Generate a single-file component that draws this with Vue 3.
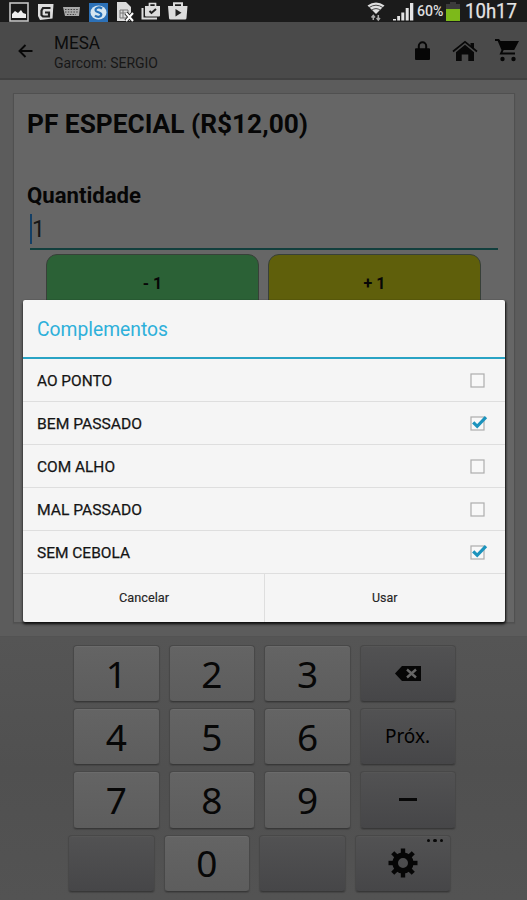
<script setup>
import { ref } from 'vue'

const options = ref([
  { label: 'AO PONTO', checked: false, width: 75 },
  { label: 'BEM PASSADO', checked: true, width: 105 },
  { label: 'COM ALHO', checked: false, width: 78 },
  { label: 'MAL PASSADO', checked: false, width: 105 },
  { label: 'SEM CEBOLA', checked: true, width: 93 },
])

const keyRows = [
  ['1', '2', '3', 'del'],
  ['4', '5', '6', 'next'],
  ['7', '8', '9', 'minus'],
  ['', '0', '', 'gear'],
]
const isDark = (k) => !/^\d$/.test(k)
</script>

<template>
  <div class="screen">
    <header class="status">
      <div class="notifications">
        <svg class="n-image" width="20" height="20" viewBox="0 0 20 20"><rect x="1" y="1" width="18" height="18" fill="#191919" stroke="#c4c4c4" stroke-width="1.6" /><path d="M3 16v-4l3-3 3 2 3-3 2 3 3 1v4z" fill="#eee" /></svg>
        <svg class="n-g" width="17" height="18" viewBox="0 0 17 18"><path d="M1 1h15.500l-1 14.500L3 17l-2-4z" fill="#dedede" /><path d="M13.500 5H6L4.500 7.500V12L6 13.500h6v-4H8" fill="none" stroke="#222" stroke-width="2.200" /></svg>
        <svg class="n-keys" width="17" height="12" viewBox="0 0 17 12"><path d="M0 1h17l-1 9H2z" fill="#aaa" /><path d="M2 3.500h14M2 6h13M4 8.500h9" stroke="#444" stroke-width="1.100" stroke-dasharray="1.500 1.300" /></svg>
        <svg class="n-s" width="19" height="19" viewBox="0 0 19 19"><rect width="19" height="19" fill="#2c71b8" /><ellipse cx="9.500" cy="9.500" rx="8" ry="7" fill="#d5e5f0" /><path d="M13 5.700C10 3.300 6 4.800 6.700 7.600 7.300 9.600 12.600 9 12.300 11.700 12 14.500 7.800 14.300 6 12.500" fill="none" stroke="#2670b8" stroke-width="2.200" /></svg>
        <svg class="n-sim" width="18" height="20" viewBox="0 0 18 20"><path d="M0 0h9l5 5v14H0z" fill="#dcdcdc" /><path d="M3 8h8v8H3zM3 11h8M6 8v8" fill="none" stroke="#777" /><path d="m9 11 7 8m0-8-7 8" stroke="#222" stroke-width="4" /><path d="m9 11 7 8m0-8-7 8" stroke="#fff" stroke-width="2" /></svg>
        <svg class="n-bag" width="20" height="18" viewBox="0 0 20 18"><path d="M1.500 6v10.500H16" fill="none" stroke="#ddd" stroke-width="2" /><path d="M4 4h15v9.500a1 1 0 0 1-1 1H5a1 1 0 0 1-1-1z" fill="#ddd" /><path d="M8.500 4V1.500h6V4" fill="none" stroke="#ddd" stroke-width="1.700" /><path d="m8.500 9 2 2L15 7" fill="none" stroke="#222" stroke-width="2" /></svg>
        <svg class="n-play" width="20" height="18" viewBox="0 0 20 18"><path d="M0 4h19.500l-1 12a1.500 1.500 0 0 1-1.500 1.500H2.500A1.500 1.500 0 0 1 1 16z" fill="#ddd" /><path d="M6 4V1.200h8V4" fill="none" stroke="#ddd" stroke-width="2" /><path d="m7.500 7 6 3.700-6 3.700z" fill="#222" /></svg>
      </div>
      <div class="indicators">
        <svg width="18" height="19" viewBox="0 0 18 19"><path d="M.5 3.500Q9-2.300 17.500 3.500L9 12z" fill="#e0e0e0" /><path d="M2 5.600Q9 .8 16 5.600M4.600 8.200Q9 5 13.400 8.200" fill="none" stroke="#333" stroke-width=".9" /><path d="M6.300 18v-4M4.500 15.500l1.800-2L8 15.500M11.300 13v4M9.600 16l1.700 2 1.700-2" fill="none" stroke="#aaa" stroke-width="1.500" /></svg>
        <svg class="signal" width="21" height="19" viewBox="0 0 21 19"><path d="M0 18.500h3V17H0zM4.200 18.500h2.800V14H4.200zM8.300 18.500h3V10.500h-3zM12.700 18.500h3V6h-3zM17 18.500h3.300V1H17z" fill="#e4e4e4" /></svg>
        <svg class="percent" width="27" height="20"><text x="0" y="14.500" textLength="26.500" lengthAdjust="spacingAndGlyphs">60%</text></svg>
        <svg class="battery" width="14" height="19" viewBox="0 0 14 19"><path d="M4 0h6v2h4v5H0V2h4z" fill="#3b3b3b" /><path d="M0 7h14v12H0z" fill="#7db91a" /></svg>
        <svg class="clock" width="53" height="22"><text x="0" y="18" textLength="52" lengthAdjust="spacingAndGlyphs">10h17</text></svg>
      </div>
    </header>

    <nav class="appbar">
      <svg class="back" width="16" height="14" viewBox="0 0 16 14"><path d="M14.500 7H2M7.500 1 1.500 7l6 6" fill="none" stroke="#080808" stroke-width="1.900" /></svg>
      <div class="titles">
        <svg width="120" height="21"><text class="t1" x="0" y="16" textLength="46" lengthAdjust="spacingAndGlyphs">MESA</text></svg>
        <svg width="120" height="18"><text class="t2" x="0" y="14" textLength="104" lengthAdjust="spacingAndGlyphs">Garcom: SERGIO</text></svg>
      </div>
      <div class="actions">
        <svg width="15" height="19" viewBox="0 0 15 19"><path fill-rule="evenodd" d="M1 7.300h1.800V5a4.700 4.700 0 0 1 9.400 0v2.300H14a1 1 0 0 1 1 1V18a1 1 0 0 1-1 1H1a1 1 0 0 1-1-1V8.300a1 1 0 0 1 1-1zm3.800 0h5.400V5a2.700 2.700 0 0 0-5.400 0z" fill="#060606" /></svg>
        <svg width="26" height="22" viewBox="0 0 26 22"><path d="M1 11.500 13 1.800l12 9.700" fill="none" stroke="#080808" stroke-width="1.700" /><path d="M18.500 3H22v6l-3.500-3z" fill="#080808" /><path d="m13 4.800 9 7.400V21h-5.700v-6.500h-6.600V21H4v-8.800z" fill="#080808" /></svg>
        <svg width="24" height="24" viewBox="0 0 24 24"><path d="M0 1h4l1.500 2H24l-4.800 9H8.700l-1.200 2.500H20v2H4.500l2-4.500L2.700 3H0z" fill="#060606" /><circle cx="7.500" cy="21" r="2.200" fill="#060606" /><circle cx="18.500" cy="21" r="2.200" fill="#060606" /></svg>
      </div>
    </nav>

    <main class="content">
      <section class="card">
        <svg class="heading" width="300" height="34"><text class="h1" x="0" y="25" textLength="281" lengthAdjust="spacingAndGlyphs">PF ESPECIAL (R$12,00)</text></svg>
        <svg class="label" width="200" height="30"><text class="h2" x="0" y="22" textLength="114" lengthAdjust="spacingAndGlyphs">Quantidade</text></svg>
        <div class="field"><span class="caret"></span><span>1</span></div>
        <div class="steppers">
          <button class="step minus">- 1</button>
          <button class="step plus">+ 1</button>
        </div>
      </section>
    </main>

    <section class="keyboard">
      <div v-for="(row, r) in keyRows" :key="r" class="keyrow" :class="{ last: r === 3 }">
        <div v-for="(k, c) in row" :key="c" class="key" :class="{ dark: isDark(k) }">
          <svg v-if="k === 'del'" width="26" height="15" viewBox="0 0 26 15"><path d="M0 7.500 7 0h19v15H7z" fill="#060606" /><path d="m12 3.500 9 8m0-8-9 8" stroke="#666" stroke-width="2.400" /></svg>
          <svg v-else-if="k === 'next'" width="46" height="30"><text class="next" x="0" y="22" textLength="45" lengthAdjust="spacing">Próx.</text></svg>
          <span v-else-if="k === 'minus'" class="dash"></span>
          <template v-else-if="k === 'gear'">
            <svg width="30" height="30" viewBox="-15 -15 30 30"><g fill="#060606"><rect v-for="a in 8" :key="a" x="-2.200" y="-14.500" width="4.400" height="8" :transform="`rotate(${a * 45})`" /></g><circle r="7.800" fill="none" stroke="#060606" stroke-width="5.600" /></svg>
            <span class="dots"><i></i><i></i><i></i></span>
          </template>
          <span v-else>{{ k }}</span>
        </div>
      </div>
    </section>

    <div class="dialog">
      <div class="dialog-title"><svg width="150" height="30"><text x="0" y="22" textLength="131" lengthAdjust="spacingAndGlyphs">Complementos</text></svg></div>
      <label v-for="o in options" :key="o.label" class="option" @click="o.checked = !o.checked">
        <svg width="130" height="24"><text x="0" y="17" :textLength="o.width" lengthAdjust="spacingAndGlyphs">{{ o.label }}</text></svg>
        <svg class="box" width="18" height="18" viewBox="0 0 18 18"><rect x="1" y="2" width="13" height="13" fill="#f8f8f8" stroke="#adadad" stroke-width="1.200" /><path v-if="o.checked" d="m3.200 7.300 4 4L16 2.200" fill="none" stroke="#1b93bd" stroke-width="3.200" /></svg>
      </label>
      <div class="footer">
        <button><svg width="50" height="18"><text x="0" y="13" textLength="50" lengthAdjust="spacingAndGlyphs">Cancelar</text></svg></button>
        <button><svg width="26" height="18"><text x="0" y="13" textLength="25.500" lengthAdjust="spacingAndGlyphs">Usar</text></svg></button>
      </div>
    </div>
  </div>
</template>

<style>
body { margin: 0; background: #5c5c5c; }
</style>

<style scoped>
* { box-sizing: border-box; }
svg { display: block; flex: none; overflow: visible; }
button { font: inherit; border: 0; padding: 0; background: none; color: inherit; }
.screen { position: relative; width: 527px; height: 900px; overflow: hidden; display: flex; flex-direction: column; background: #5c5c5c; font-family: Roboto, "Liberation Sans", sans-serif; color: #070707; }
.status { height: 22px; background: #1b1b1b; display: flex; justify-content: space-between; padding: 2px 9px 0; }
.notifications, .indicators { display: flex; align-items: flex-start; }
.n-g { margin: 1px 0 0 8px; }
.n-keys { margin: 4px 0 0 9px; }
.n-s { margin: 1px 0 0 9px; }
.n-sim { margin: 0 0 0 9px; }
.n-bag { margin: 0 0 0 6px; }
.n-play { margin: 0 0 0 7px; }
.signal { margin-left: 8px; }
.percent { margin: -1px 0 0 3px; }
.percent text { font-size: 15px; fill: #ddd; font-weight: 500; }
.battery { margin-left: 2px; }
.clock { margin: -2px 0 0 5px; }
.clock text { font-size: 20.500px; fill: #e4e4e4; stroke: #e4e4e4; stroke-width: .25px; }
.appbar { height: 58px; background: #4a4a4a; border-bottom: 2px solid #404040; display: flex; align-items: center; padding: 0 8px 0 18px; }
.back { margin-top: 1px; }
.titles { margin-left: 20px; padding-top: 4px; }
.t1 { font-size: 18.500px; fill: #0c0c0c; }
.t2 { font-size: 14px; fill: #171717; }
.actions { margin-left: auto; display: flex; align-items: center; gap: 21px; padding-top: 1px; }
.actions svg:first-child { margin-right: 1px; }
.actions svg:nth-child(2) { margin-right: 1px; margin-top: 1px; }
.actions svg:last-child { margin: -2px 0 0 -5px; }
.content { height: 556px; padding: 13px 12px 0 13px; }
.card { height: 530px; border: 1px solid #505050; background: #666; padding: 14px 16px 0 13px; box-shadow: 0 1px 1px #545454; }
.h1 { font-size: 25px; font-weight: 700; }
.label { margin-top: 39px; }
.h1, .h2 { fill: #060606; }
.h2 { font-size: 22px; font-weight: 700; }
.field { height: 39px; margin: 0 0 0 3px; border-bottom: 2px solid #123f3d; display: flex; align-items: center; font-size: 23px; color: #171717; }
.field > span { margin-top: -1px; }
.field .caret { width: 2px; height: 30px; background: #143f65; }
.steppers { display: flex; gap: 9px; padding: 4px 0 0 19px; }
.step { width: 213px; height: 59px; border-radius: 11px; border: 1px solid #384039; font-size: 16px; font-weight: 700; }
.minus { background: #2b6136; }
.plus { background: #5f5f0b; }
.keyboard { flex: 1; background: linear-gradient(#555, #505050 50%, #535353); padding: 8px 0 0 73px; border-top: 1px solid #535353; display: flex; flex-direction: column; gap: 6px; }
.keyrow { display: grid; grid-template-columns: 86.500px 86.500px 87px 96px; gap: 9px; height: 57.200px; }
.keyrow.last { margin-left: -5px; }
.key { position: relative; display: flex; align-items: center; justify-content: center; background: linear-gradient(#646464, #5d5d5d); border: 1px solid #484848; border-bottom-color: #383838; border-radius: 4px; box-shadow: inset 0 1px #6b6b6b, 0 1px 1px #454545; font-family: "Noto Sans", sans-serif; font-size: 37px; line-height: 1; padding-bottom: 1px; }
.key.dark { background: linear-gradient(#525253, #464648); box-shadow: inset 0 1px #565656, 0 1px 1px #454545; }
.next { font-size: 19px; }
.dash { width: 18px; height: 3px; background: #080808; }
.dots { position: absolute; right: 7px; top: 3px; display: flex; gap: 3px; }
.dots i { width: 3.500px; height: 3.500px; border-radius: 50%; background: #080808; }
.dialog { position: absolute; left: 23px; top: 300px; width: 482px; height: 322px; background: #f5f5f5; border-radius: 2px; box-shadow: 0 2px 3px #111, 1px 1px 2px #222; }
.dialog-title { height: 59px; border-bottom: 2px solid #29a3c4; padding: 14px 14px 0; }
.dialog-title text { font-size: 20px; fill: #2eb0da; }
.option { height: 43px; border-bottom: 1px solid #dedede; display: flex; align-items: center; justify-content: space-between; padding: 1px 17.500px 0 14px; }
.option text { font-size: 15.500px; fill: #151515; stroke: #151515; stroke-width: .25px; }
.footer { height: 48px; display: grid; grid-template-columns: 242px 1fr; }
.footer button { display: flex; align-items: center; justify-content: center; }
.footer button:first-child { border-right: 1px solid #dedede; }
.footer text { font-size: 12.500px; fill: #252525; stroke: #252525; stroke-width: .15px; }
</style>
